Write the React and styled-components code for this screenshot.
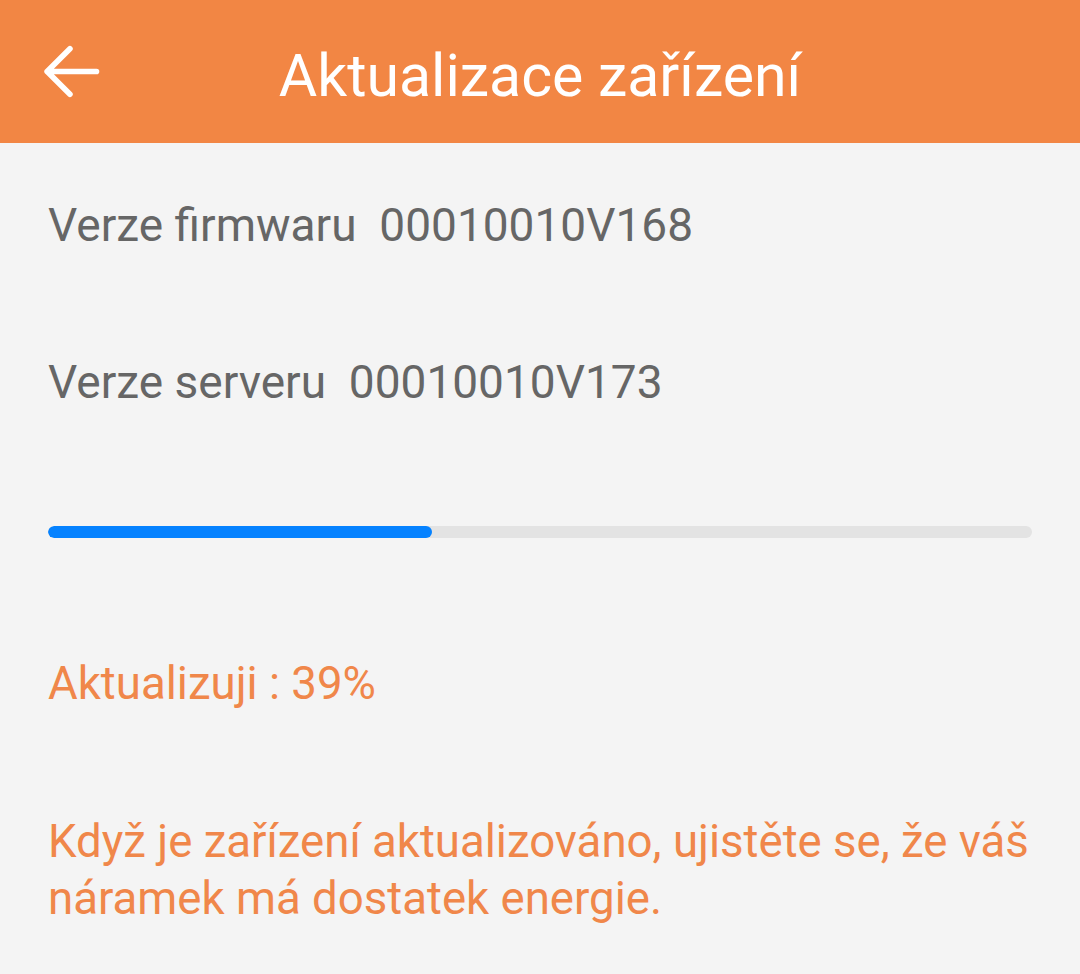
import React from 'react'
import styled, { createGlobalStyle } from 'styled-components'

const GlobalStyle = createGlobalStyle`
  html, body {
    margin: 0;
    padding: 0;
    background: #f4f4f4;
  }
  body {
    font-family: Roboto, "Noto Sans", "Liberation Sans", sans-serif;
  }
`

const Screen = styled.div`
  width: 1080px;
  min-height: 974px;
  background: #f4f4f4;
  display: flex;
  flex-direction: column;
`

const Header = styled.header`
  height: 143px;
  background: #f28644;
  display: flex;
  align-items: center;
  padding: 0 34px;
  box-sizing: border-box;
`

const BackButton = styled.button`
  width: 75px;
  height: 75px;
  border: 0;
  padding: 0;
  background: transparent;
  display: flex;
  align-items: center;
  justify-content: center;
  cursor: pointer;
`

const Title = styled.h1`
  flex: 1;
  margin: 7px 75px 0 0;
  text-align: center;
  color: #fff;
  font-size: 59px;
  line-height: normal;
  font-weight: 400;
`

const Content = styled.main`
  display: flex;
  flex-direction: column;
  padding: 0 48px;
`

const InfoRow = styled.div`
  color: #666666;
  font-size: 46px;
  line-height: 50px;
  margin-top: ${(p) => p.top}px;
  white-space: pre;
`

const Track = styled.div`
  height: 12px;
  border-radius: 6px;
  background: #e3e3e3;
  margin-top: 119px;
  overflow: hidden;
`

const Fill = styled.div`
  height: 100%;
  border-radius: 6px;
  background: #0582ff;
`

const Note = styled.p`
  margin: ${(p) => p.top}px -30px 0 0;
  color: #f0874a;
  font-size: 45.6px;
  line-height: 57px;
`

const ArrowBack = () => (
  <svg width="75" height="75" viewBox="0 0 24 24" fill="none" stroke="#fff" strokeWidth="1.8" strokeLinecap="round" strokeLinejoin="round">
    <path d="M20 12H4.2M11.5 4.7L4.2 12l7.3 7.3" />
  </svg>
)

export default function App() {
  const progress = 39

  return (
    <Screen>
      <GlobalStyle />
      <Header>
        <BackButton aria-label="Zpět">
          <ArrowBack />
        </BackButton>
        <Title>Aktualizace zařízení</Title>
      </Header>
      <Content>
        <InfoRow top={57}>{'Verze firmwaru  00010010V168'}</InfoRow>
        <InfoRow top={107}>{'Verze serveru  00010010V173'}</InfoRow>
        <Track>
          <Fill style={{ width: `${progress}%` }} />
        </Track>
        <Note top={117}>Aktualizuji : {progress}%</Note>
        <Note top={101}>
          Když je zařízení aktualizováno, ujistěte se, že váš náramek má dostatek energie.
        </Note>
      </Content>
    </Screen>
  )
}
